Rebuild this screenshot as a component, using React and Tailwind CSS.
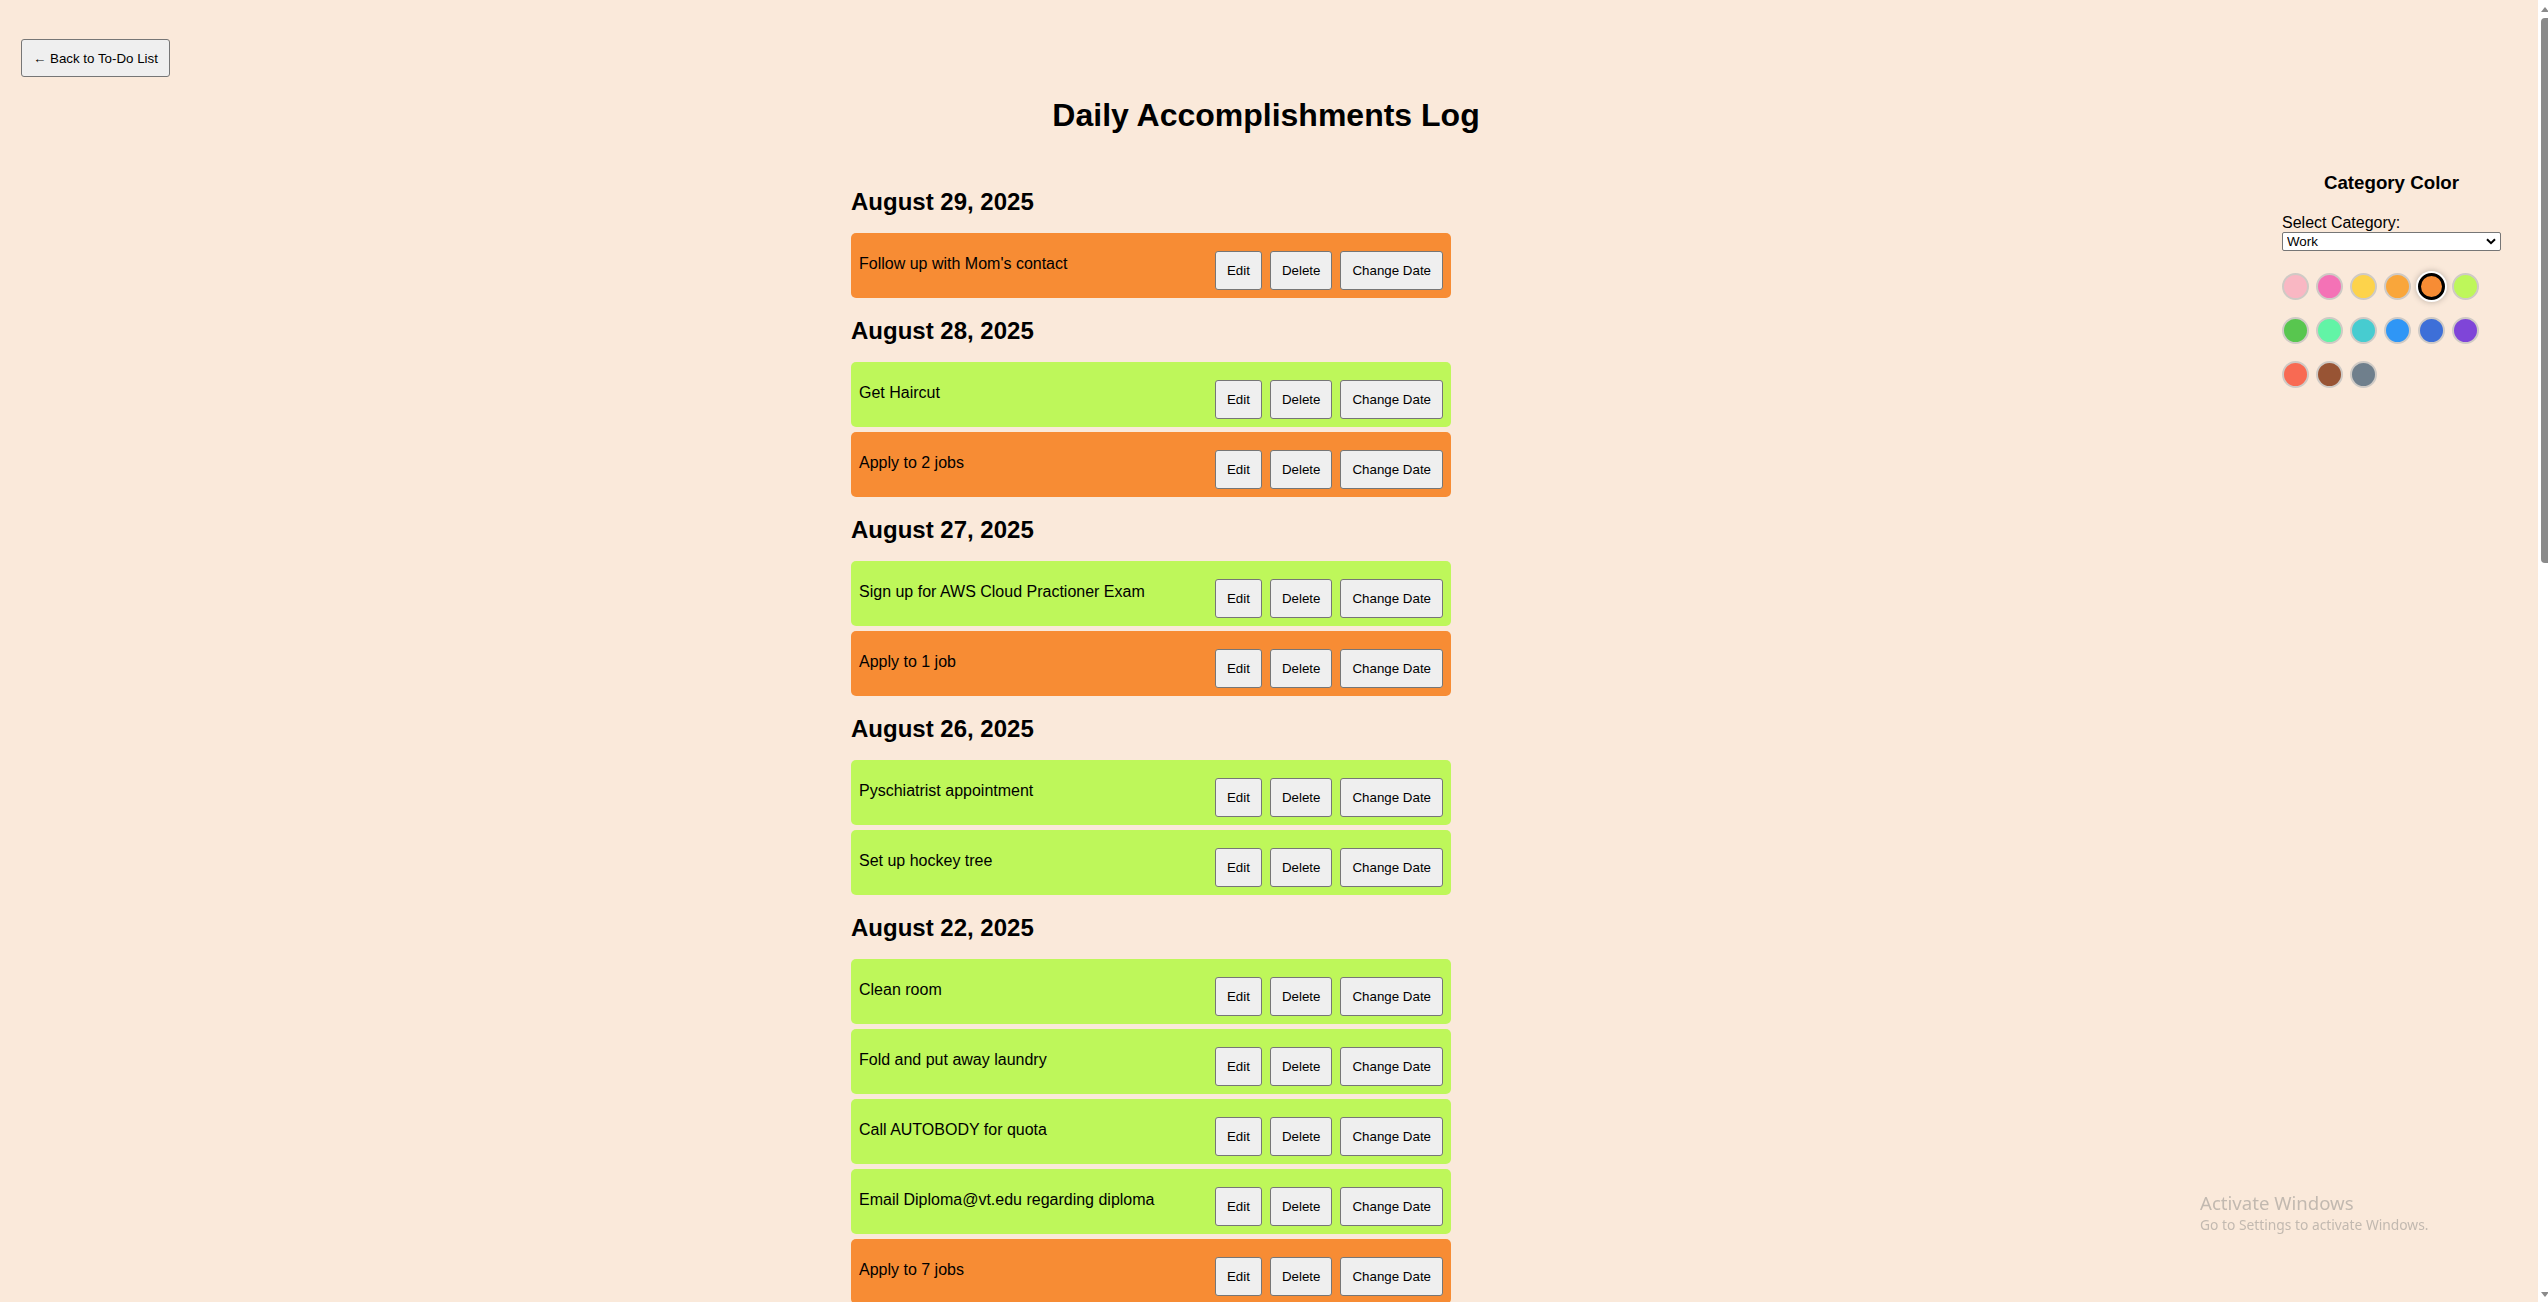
import React from "react";

const ORANGE = "#f78c34";
const LIME = "#bef75a";

const groups = [
  { date: "August 29, 2025", items: [["Follow up with Mom's contact", ORANGE]] },
  {
    date: "August 28, 2025",
    items: [
      ["Get Haircut", LIME],
      ["Apply to 2 jobs", ORANGE],
    ],
  },
  {
    date: "August 27, 2025",
    items: [
      ["Sign up for AWS Cloud Practioner Exam", LIME],
      ["Apply to 1 job", ORANGE],
    ],
  },
  {
    date: "August 26, 2025",
    items: [
      ["Pyschiatrist appointment", LIME],
      ["Set up hockey tree", LIME],
    ],
  },
  {
    date: "August 22, 2025",
    items: [
      ["Clean room", LIME],
      ["Fold and put away laundry", LIME],
      ["Call AUTOBODY for quota", LIME],
      ["Email Diploma@vt.edu regarding diploma", LIME],
      ["Apply to 7 jobs", ORANGE],
    ],
  },
];

const swatches = [
  "#f9b7c3",
  "#f472b6",
  "#fdd34b",
  "#f9a63b",
  "#f78c34",
  "#bef75a",
  "#58c64f",
  "#62f4a6",
  "#47ccd0",
  "#2f96f6",
  "#3d6fd8",
  "#7f45d8",
  "#f86a53",
  "#985434",
  "#6f7f8c",
];

function Btn({ children }) {
  return (
    <button className="h-[39px] px-[11px] border border-[#767676] bg-[#efefef] rounded-[3px] text-[13.33px] leading-[15px] text-black">
      {children}
    </button>
  );
}

function Card({ text, color }) {
  return (
    <div
      className="flex items-center justify-between rounded-[5px] p-[8px] mb-[5px]"
      style={{ backgroundColor: color }}
    >
      <span className="text-[16px] leading-[18px] text-black mb-[4px]">{text}</span>
      <div className="flex gap-[8px] mt-[10px]">
        <Btn>Edit</Btn>
        <Btn>Delete</Btn>
        <Btn>Change Date</Btn>
      </div>
    </div>
  );
}

function Scrollbar() {
  return (
    <div className="fixed right-0 top-0 h-screen w-[10px] bg-white pointer-events-none">
      <svg className="absolute left-[3px] top-[6px]" width="8" height="6" viewBox="0 0 8 6">
        <path d="M0 6 L4 1 L8 6 Z" fill="#8a8a8a" />
      </svg>
      <div className="absolute left-[3px] right-0 top-[18px] h-[545px] rounded-l-[4px] bg-[#8a8a8a]" />
      <svg className="absolute left-[3px] bottom-[4px]" width="8" height="6" viewBox="0 0 8 6">
        <path d="M0 0 L4 5 L8 0 Z" fill="#8a8a8a" />
      </svg>
    </div>
  );
}

export default function App() {
  return (
    <div
      className="min-h-screen bg-[#fae9da] text-black pr-[10px] pb-[60px]"
      style={{ fontFamily: '"Liberation Sans", Arial, sans-serif' }}
    >
      <div className="pt-[39px] pl-[21px]">
        <button className="h-[38px] px-[11px] border border-[#767676] bg-[#efefef] rounded-[3px] text-[13.33px] leading-[15px] text-black">
          ← Back to To-Do List
        </button>
      </div>
      <h1 className="mt-[20px] pr-[6px] text-center text-[32px] leading-[37px] font-bold">
        Daily Accomplishments Log
      </h1>
      <div className="flex items-start">
        <div className="ml-[851px] w-[600px] pt-[40px] flex flex-col">
          {groups.map((g) => (
            <div key={g.date} className="flow-root">
              <h2 className="mt-[14px] mb-[17px] text-[24px] leading-[28px] font-bold">{g.date}</h2>
              {g.items.map(([t, c]) => (
                <Card key={t} text={t} color={c} />
              ))}
            </div>
          ))}
        </div>
        <div className="ml-auto mr-[37px] w-[219px] pt-[38px]">
          <h3 className="text-center text-[18.72px] leading-[22px] font-bold mb-[20px]">Category Color</h3>
          <label className="block text-[16px] leading-[18px]">Select Category:</label>
          <div className="relative">
            <select
              defaultValue="Work"
              className="block w-full h-[19px] appearance-none border border-[#767676] rounded-[2px] bg-white pl-[4px] text-[13.33px] leading-[15px] text-black"
            >
              <option>Work</option>
              <option>Personal</option>
              <option>Health</option>
            </select>
            <svg
              className="absolute right-[5px] top-[6px] pointer-events-none"
              width="10"
              height="7"
              viewBox="0 0 10 7"
            >
              <path d="M1 1.2 L5 5.2 L9 1.2" fill="none" stroke="#000" strokeWidth="2" />
            </svg>
          </div>
          <div className="mt-[22px] flex flex-wrap gap-x-[7px] gap-y-[17px]">
            {swatches.map((c, i) =>
              i === 4 ? (
                <div
                  key={c}
                  className="w-[27px] h-[27px] rounded-full border-[3px] border-black shadow-[0_0_0_2px_#ffffff,0_0_6px_2px_rgba(0,0,0,0.25)]"
                  style={{ backgroundColor: c }}
                />
              ) : (
                <div
                  key={c}
                  className="w-[27px] h-[27px] rounded-full border-[2px] border-[#cfcac5]"
                  style={{ backgroundColor: c }}
                />
              )
            )}
          </div>
        </div>
      </div>
      <div
        className="fixed left-[2200px] top-[1192px] text-[#c2b9b0] pointer-events-none"
        style={{ fontFamily: '"Noto Sans", "Open Sans", sans-serif' }}
      >
        <div className="text-[18.6px] leading-[22px]">Activate Windows</div>
        <div className="text-[13.8px] leading-[21px]">Go to Settings to activate Windows.</div>
      </div>
      <Scrollbar />
    </div>
  );
}
